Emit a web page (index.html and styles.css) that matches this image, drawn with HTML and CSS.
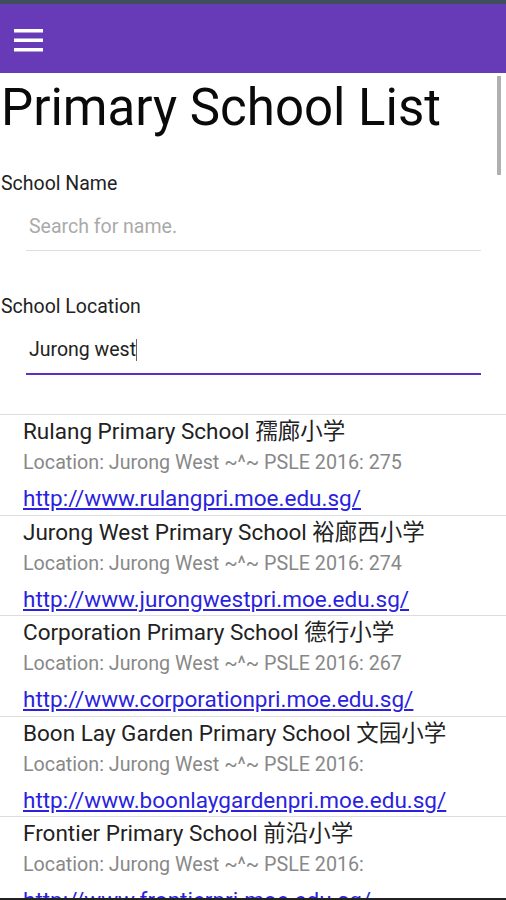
FILE: index.html
```html
<!DOCTYPE html>
<html lang="en">
<head>
  <meta charset="UTF-8">
  <title>Primary School List</title>
  <link rel="stylesheet" href="styles.css">
</head>
<body>
  <div class="statusbar"></div>
  <div class="toolbar">
    <svg class="menu" width="30" height="24" viewBox="0 0 30 24">
      <rect x="0" y="0" width="29" height="3.5" fill="#fff"/>
      <rect x="0" y="9.5" width="29" height="3.5" fill="#fff"/>
      <rect x="0" y="19" width="29" height="3.5" fill="#fff"/>
    </svg>
  </div>

  <div class="page">
    <div class="scroll"></div>
    <h1>Primary School List</h1>

    <div class="champ">
      <label>School Name</label>
      <div class="saisie"><span class="vide">Search for name.</span></div>
    </div>

    <div class="champ">
      <label>School Location</label>
      <div class="saisie actif"><span>Jurong west</span><span class="curseur"></span></div>
    </div>

    <ul id="ecoles"></ul>
  </div>
  <div class="bas"></div>

  <script>
    const ecoles = [
      ["Rulang Primary School 孺廊小学", "275", "http://www.rulangpri.moe.edu.sg/"],
      ["Jurong West Primary School 裕廊西小学", "274", "http://www.jurongwestpri.moe.edu.sg/"],
      ["Corporation Primary School 德行小学", "267", "http://www.corporationpri.moe.edu.sg/"],
      ["Boon Lay Garden Primary School 文园小学", "", "http://www.boonlaygardenpri.moe.edu.sg/"],
      ["Frontier Primary School 前沿小学", "", "http://www.frontierpri.moe.edu.sg/"]
    ];

    document.getElementById("ecoles").innerHTML = ecoles.map(e =>
      `<li>
        <div class="nom">${e[0]}</div>
        <div class="lieu">Location: Jurong West ~^~ PSLE 2016: ${e[1]}</div>
        <a href="#">${e[2]}</a>
      </li>`).join("");
  </script>
</body>
</html>
```

FILE: styles.css
```css
html, body {
  margin: 0;
  padding: 0;
  height: 900px;
  overflow: hidden;
  background: #fff;
  font-family: Roboto, "Noto Sans CJK SC", sans-serif;
}
.statusbar {
  height: 4px;
  background: #3e4e5a;
}
.toolbar {
  height: 69px;
  background: #673ab7;
  display: flex;
  align-items: center;
  padding-left: 14px;
}
.menu {
  margin-top: 4px;
}
.page {
  position: relative;
}
.scroll {
  position: absolute;
  right: 5px;
  top: 3px;
  width: 4px;
  height: 99px;
  background: #b0b0b0;
}
h1 {
  margin: 0;
  padding: 4px 0 0 1px;
  font-size: 51px;
  font-weight: 400;
  line-height: 62px;
  color: #0a0a0a;
}
.champ {
  margin-top: 34px;
}
.champ + .champ {
  margin-top: 45px;
}
label {
  display: block;
  font-size: 19.5px;
  line-height: 22px;
  padding-left: 1px;
  color: #222;
}
.saisie {
  margin: 21px 25px 0 26px;
  padding: 0 0 12px 3px;
  font-size: 19.5px;
  line-height: 22px;
  border-bottom: 1px solid #ddd;
  color: #222;
  display: flex;
  align-items: center;
}
.saisie.actif {
  border-bottom: 2px solid #5e2fc0;
}
.vide {
  color: #aaa;
}
.curseur {
  width: 1px;
  height: 22px;
  background: #666;
}
ul {
  list-style: none;
  margin: 39px 0 0 0;
  padding: 0;
  border-top: 1px solid #ddd;
}
li {
  padding: 0 0 0 23px;
  height: 99.5px;
  border-bottom: 1px solid #ddd;
  overflow: hidden;
}
.nom {
  font-size: 22.5px;
  line-height: 32px;
  color: #222;
}
.lieu {
  font-size: 19.7px;
  line-height: 32px;
  color: #888;
}
a {
  display: block;
  font-size: 22.5px;
  line-height: 38px;
  color: #2b1fe0;
}
.bas {
  position: absolute;
  left: 0;
  right: 0;
  bottom: 0;
  height: 2px;
  background: #222;
}
```
